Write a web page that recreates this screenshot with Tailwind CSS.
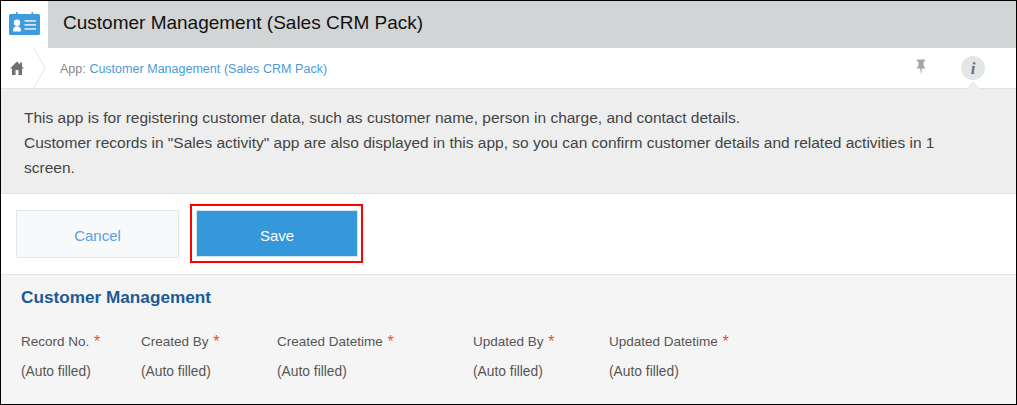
<!DOCTYPE html>
<html lang="en">
<head>
  <meta charset="UTF-8">
  <title>Customer Management (Sales CRM Pack)</title>
  <script src="https://cdn.jsdelivr.net/npm/@tailwindcss/browser@4"></script>
</head>
<body class="bg-white font-['Liberation_Sans',sans-serif]">
  <div class="w-[1017px] h-[405px] overflow-hidden border border-black flex flex-col">
    <!-- title bar -->
    <div class="flex h-[47px] shrink-0">
      <div class="w-[47px] bg-white flex items-center justify-center pb-[1px]">
        <svg width="32" height="24" viewBox="0 0 32 24">
          <rect x="0" y="2" width="31" height="21" rx="1.5" fill="#3d9be0"/>
          <rect x="7" y="0" width="1.500" height="3" fill="#3d9be0"/>
          <rect x="22.500" y="0" width="1.500" height="3" fill="#3d9be0"/>
          <circle cx="8" cy="10.800" r="3.200" fill="#fff"/>
          <path d="M4.200 19.500v-2c0-2 1.500-3.300 3.800-3.300s3.800 1.300 3.800 3.300v2z" fill="#fff"/>
          <rect x="15.500" y="8" width="11.500" height="1.800" fill="#cfe5f6"/>
          <rect x="15.500" y="12" width="11.500" height="1.800" fill="#cfe5f6"/>
          <rect x="15.500" y="16" width="11.500" height="1.800" fill="#cfe5f6"/>
        </svg>
      </div>
      <div class="flex-1 bg-[#d1d5d5] flex items-center pl-[15px] pb-[3px]">
        <h1 class="text-[19px] text-[#111]">Customer Management (Sales CRM Pack)</h1>
      </div>
    </div>
    <!-- breadcrumb -->
    <div class="relative flex items-center h-[41px] shrink-0 bg-white border-b border-[#e3e3e3]">
      <div class="w-[31px] flex justify-center pl-[1px]">
        <svg width="14" height="14" viewBox="0 0 14 14">
          <path d="M7 0.500 L14 7.500 H12 V14 H8.500 V9 H5.500 V14 H2 V7.500 H0 Z" fill="#6f6f6f"/>
          <rect x="10" y="1.500" width="2" height="3.500" fill="#6f6f6f"/>
        </svg>
      </div>
      <svg class="absolute left-[32px] top-0" width="14" height="40" viewBox="0 0 14 40">
        <path d="M1 0 L12 20 L1 40" fill="none" stroke="#e4e6e6" stroke-width="1"/>
      </svg>
      <p class="ml-[28px] pt-[2px] text-[12.5px] text-[#888] [word-spacing:0.2px]">App: <span class="text-[#4a9ad8]">Customer Management (Sales CRM Pack)</span></p>
      <svg class="absolute left-[913px] top-[11px]" width="14" height="16" viewBox="0 0 14 16">
        <path d="M3 0.500H11V2.500H9.500V6.500L11.500 9.500H7.800L7 16 L6.200 9.500H2.500L4.500 6.500V2.500H3Z" fill="#a3a5a5"/>
      </svg>
      <div class="absolute left-[960px] top-[8px] w-[24px] h-[24px] rounded-full bg-[#e3e6e6] flex items-center justify-center">
        <span class="font-['Liberation_Serif',serif] italic font-bold text-[17px] leading-none text-[#6f7171]">i</span>
      </div>
      <div class="absolute left-[965px] top-[33px] w-0 h-0 border-x-[7px] border-x-transparent border-b-[8px] border-b-[#eeeeee]"></div>
    </div>
    <!-- description -->
    <div class="h-[105px] shrink-0 bg-[#eeeeee] border-b border-[#e3e3e3] pl-[23px] pr-[60px] pt-[16px] text-[15.5px] leading-[25px] text-[#444]">
      <p>This app is for registering customer data, such as customer name, person in charge, and contact details.</p>
      <p>Customer records in "Sales activity" app are also displayed in this app, so you can confirm customer details and related activities in 1 screen.</p>
    </div>
    <!-- actions -->
    <div class="h-[81px] shrink-0 bg-white border-b border-[#e3e3e3] flex items-start pl-[15px] pt-[10px] gap-[11px]">
      <button class="mt-[6px] w-[163px] h-[48px] pt-[4px] bg-[#f7f9fa] border border-[#e3e7e8] text-[15px] text-[#5b9fde]">Cancel</button>
      <div class="border-2 border-[#ff0000] p-[4px] pr-[3px]">
        <button class="block w-[162px] h-[47px] pt-[5px] bg-[#3498db] border border-[#d5e5f0] text-[15px] text-white">Save</button>
      </div>
    </div>
    <!-- record form -->
    <div class="flex-1 bg-[#f5f5f5] pl-[20px] pt-[11px]">
      <h2 class="text-[17.2px] leading-[22px] font-bold text-[#1c5a96]">Customer Management</h2>
      <div class="flex mt-[23px] text-[13.5px] text-[#555]">
        <div class="w-[120px]">
          <p class="leading-[20px]">Record No. <span class="relative top-[1px] ml-[1px] text-[#e74c3c] text-[16px]">*</span></p>
          <p class="mt-[12px] leading-[16px] text-[13.8px]">(Auto filled)</p>
        </div>
        <div class="w-[136px]">
          <p class="leading-[20px]">Created By <span class="relative top-[1px] ml-[1px] text-[#e74c3c] text-[16px]">*</span></p>
          <p class="mt-[12px] leading-[16px] text-[13.8px]">(Auto filled)</p>
        </div>
        <div class="w-[196px]">
          <p class="leading-[20px]">Created Datetime <span class="relative top-[1px] ml-[1px] text-[#e74c3c] text-[16px]">*</span></p>
          <p class="mt-[12px] leading-[16px] text-[13.8px]">(Auto filled)</p>
        </div>
        <div class="w-[136px]">
          <p class="leading-[20px]">Updated By <span class="relative top-[1px] ml-[1px] text-[#e74c3c] text-[16px]">*</span></p>
          <p class="mt-[12px] leading-[16px] text-[13.8px]">(Auto filled)</p>
        </div>
        <div class="w-[196px]">
          <p class="leading-[20px]">Updated Datetime <span class="relative top-[1px] ml-[1px] text-[#e74c3c] text-[16px]">*</span></p>
          <p class="mt-[12px] leading-[16px] text-[13.8px]">(Auto filled)</p>
        </div>
      </div>
    </div>
  </div>
</body>
</html>
